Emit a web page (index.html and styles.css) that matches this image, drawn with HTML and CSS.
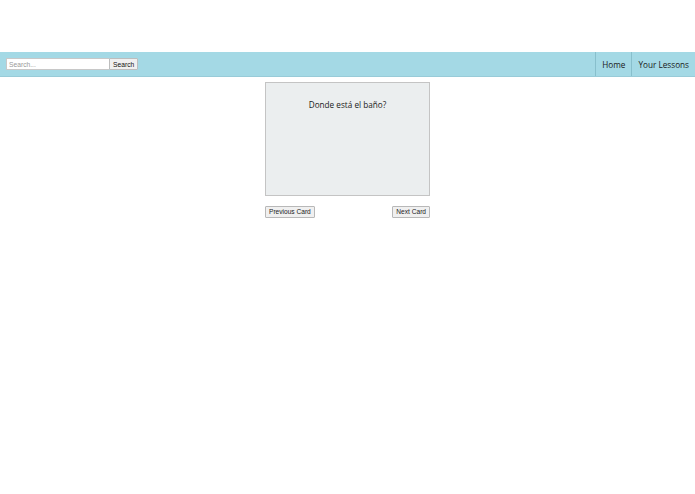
FILE: index.html
```html
<!DOCTYPE html>
<html lang="en">
<head>
    <meta charset="UTF-8">
    <meta name="viewport" content="width=device-width, initial-scale=1.0">
    <title>Flashcards</title>
    <link rel="stylesheet" href="styles.css">
</head>
<body>

    <div class="top-space"></div>

    <nav class="navbar">
        <form class="search-form">
            <input type="text" class="search-input" placeholder="Search...">
            <button type="button" class="search-btn">Search</button>
        </form>
        <ul class="nav-links">
            <li><a href="#">Home</a></li>
            <li><a href="#">Your Lessons</a></li>
        </ul>
    </nav>

    <div class="deck">
        <div class="card">
            <p class="card-text">Donde está el baño?</p>
        </div>
        <div class="card-controls">
            <button type="button" class="card-btn">Previous Card</button>
            <button type="button" class="card-btn">Next Card</button>
        </div>
    </div>

</body>
</html>
```

FILE: styles.css
```css
* {
    box-sizing: border-box;
}

body {
    margin: 0;
    font-family: 'Open Sans', sans-serif;
    color: #1a1a1a;
    background: #fff;
}

.top-space {
    height: 52px;
}

.navbar {
    display: flex;
    justify-content: space-between;
    align-items: stretch;
    height: 25px;
    background-color: #a4d9e5;
    border-bottom: 1px solid #98cbd8;
}

.search-form {
    display: flex;
    align-items: center;
    padding-left: 6px;
}

.search-input {
    width: 103px;
    height: 12px;
    padding: 0 2px;
    border: 1px solid #c8c8c8;
    border-right: none;
    font-family: 'Liberation Sans', Arial, sans-serif;
    font-size: 6.7px;
    background: #fff;
}

.search-input::placeholder {
    color: #999;
}

.search-btn {
    height: 12px;
    padding: 0 3px;
    border: 1px solid #bdbdbd;
    border-radius: 1px;
    background: #f0f0f0;
    font-family: 'Liberation Sans', Arial, sans-serif;
    font-size: 6.7px;
    color: #111;
}

.nav-links {
    display: flex;
    margin: 0;
    padding: 0;
    list-style: none;
}

.nav-links li {
    display: flex;
    border-left: 1px solid #88bfcc;
}

.nav-links a {
    display: flex;
    align-items: center;
    padding: 0 6px;
    font-size: 8.2px;
    color: #1a1a1a;
    text-decoration: none;
}

.deck {
    width: 165px;
    margin: 5px auto 0;
}

.card {
    height: 114px;
    background-color: #ebeeef;
    border: 1px solid #c4c4c4;
}

.card-text {
    margin: 16px 0 0;
    text-align: center;
    font-size: 8.2px;
}

.card-controls {
    display: flex;
    justify-content: space-between;
    margin-top: 10px;
}

.card-btn {
    height: 12px;
    padding: 0 3px;
    border: 1px solid #b8b8b8;
    border-radius: 1px;
    background: #f0f0f0;
    font-family: 'Liberation Sans', Arial, sans-serif;
    font-size: 6.6px;
    line-height: 1;
    color: #222;
}
```
